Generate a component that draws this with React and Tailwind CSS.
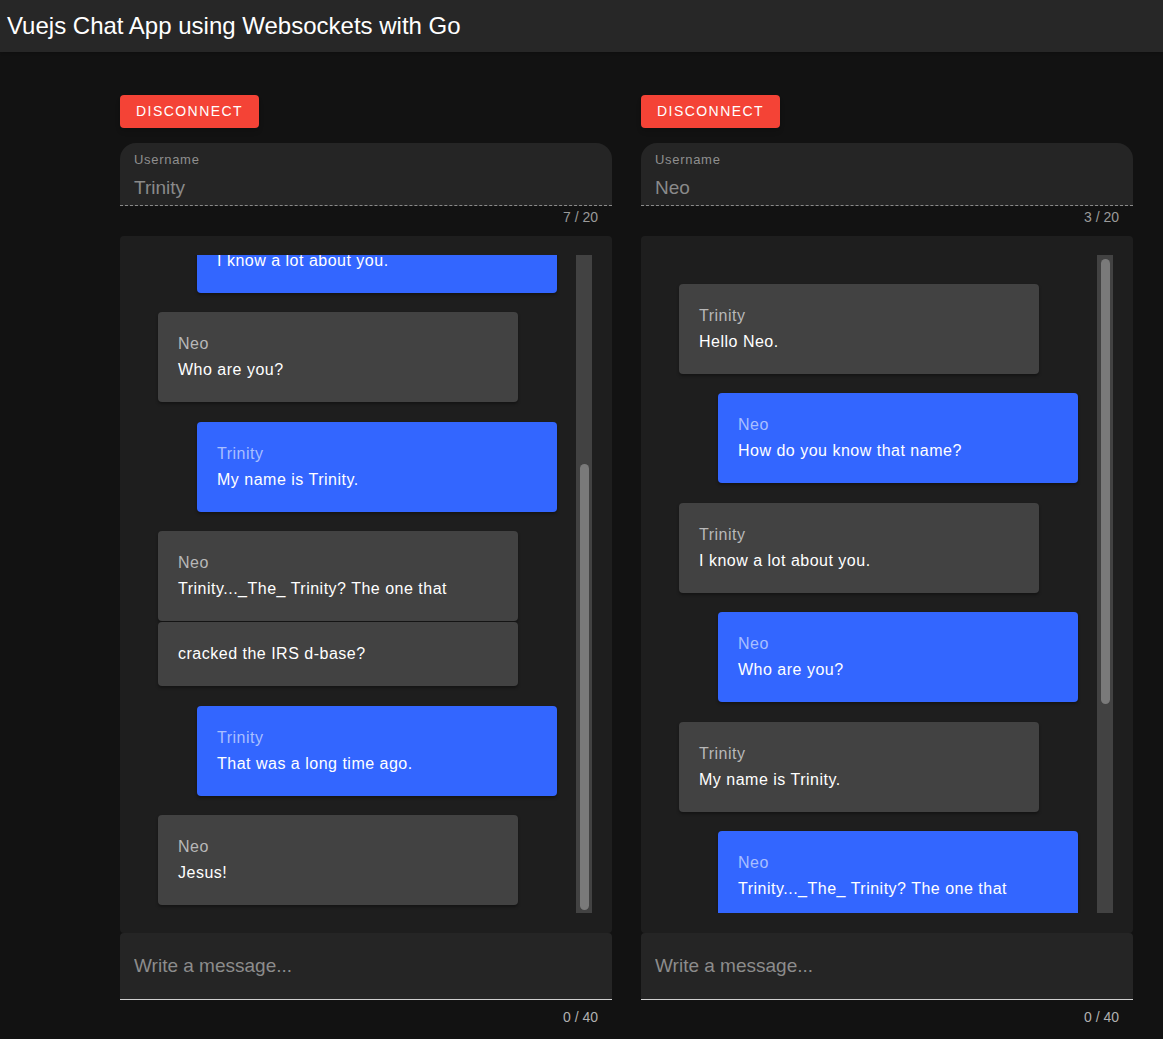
import React from 'react';

const font = { fontFamily: '"Liberation Sans", Arial, sans-serif' };

// left panel is scrolled to the bottom, right panel to the top
const leftMessages = [
  { from: 'Trinity', text: 'I know a lot about you.' },
  { from: 'Neo', text: 'Who are you?' },
  { from: 'Trinity', text: 'My name is Trinity.' },
  { from: 'Neo', text: 'Trinity..._The_ Trinity? The one that', more: 'cracked the IRS d-base?' },
  { from: 'Trinity', text: 'That was a long time ago.' },
  { from: 'Neo', text: 'Jesus!' },
];

const rightMessages = [
  { from: 'Trinity', text: 'Hello Neo.' },
  { from: 'Neo', text: 'How do you know that name?' },
  { from: 'Trinity', text: 'I know a lot about you.' },
  { from: 'Neo', text: 'Who are you?' },
  { from: 'Trinity', text: 'My name is Trinity.' },
  { from: 'Neo', text: 'Trinity..._The_ Trinity? The one that' },
];

const Bubble = ({ msg, mine }) => {
  const box = mine
    ? 'bg-[#3366ff] self-end mr-[19px]'
    : 'bg-[#424242] self-start ml-[18px]';
  const nameColor = mine ? 'text-[#a9bfff]' : 'text-[#b8b8b8]';
  return (
    <div className={`flex flex-col shrink-0 ${mine ? 'items-end' : 'items-start'}`}>
      <div className={`w-[360px] rounded px-5 pt-5 pb-5 shadow-[0_2px_3px_rgba(0,0,0,0.35)] ${box}`}>
        <div className={`text-base leading-6 mb-[2px] tracking-[0.5px] ${nameColor}`}>{msg.from}</div>
        <div className="text-base leading-6 tracking-[0.5px] text-white">{msg.text}</div>
      </div>
      {msg.more && (
        <div className={`w-[360px] mt-px rounded px-5 py-5 shadow-[0_2px_3px_rgba(0,0,0,0.35)] ${box}`}>
          <div className="text-base leading-6 tracking-[0.5px] text-white">{msg.more}</div>
        </div>
      )}
    </div>
  );
};

const ChatPanel = ({ user, messages, bottom, thumbTop, thumbHeight }) => (
  <div className="flex flex-col">
    <div>
      <button className="h-[33px] px-4 pb-[1px] rounded bg-[#f44336] text-white text-sm font-medium uppercase tracking-[1.45px] shadow-md">
        Disconnect
      </button>
    </div>

    <div className="mt-[15px] h-[63px] rounded-t-2xl bg-[#252525] border-b border-dashed border-[#8a8a8a] px-[14px] pt-[9px]">
      <div className="text-[13px] leading-4 tracking-[0.7px] text-[#8f8f8f]">Username</div>
      <div className="mt-[8px] text-[19px] leading-6 text-[#8a8a8a]">{user}</div>
    </div>
    <div className="h-[30px] flex justify-end items-start pt-[4px] px-[14px] text-sm leading-none text-[#9a9a9a]">
      {user.length} / 20
    </div>

    <div className="h-[697px] rounded bg-[#1e1e1e] pt-[19px] pb-5 px-5 flex">
      <div
        className={`flex-1 h-[658px] overflow-hidden flex flex-col gap-[19.4px] ${
          bottom ? 'justify-end pb-2' : 'justify-start pt-[29px]'
        }`}
      >
        {messages.map((m, i) => (
          <Bubble key={i} msg={m} mine={m.from === user} />
        ))}
      </div>
      <div className="w-4 h-[658px] bg-[#424242] relative">
        <div
          className={`absolute left-[4px] w-[9px] rounded-full bg-[#7a7a7a] ${thumbTop} ${thumbHeight}`}
        />
      </div>
    </div>

    <div className="h-[67px] rounded-t bg-[#252525] border-b border-[#d0d0d0] flex items-center px-[14px]">
      <input
        className="w-full bg-transparent outline-none text-[19px] text-white placeholder:text-[#8c8c8c]"
        placeholder="Write a message..."
        style={font}
      />
    </div>
    <div className="h-[34px] flex justify-end items-center px-[14px] text-sm leading-none text-[#b0b0b0]">
      0 / 40
    </div>
  </div>
);

export default function App() {
  return (
    <div className="min-h-screen bg-[#121212] text-white" style={font}>
      <header className="h-[52px] bg-[#272727] flex items-center px-[7px] shadow">
        <h1 className="text-2xl leading-8 text-white">Vuejs Chat App using Websockets with Go</h1>
      </header>
      <main className="pl-[120px] pr-[30px] pt-[43px] grid grid-cols-2 gap-[29px]">
        <ChatPanel
          user="Trinity"
          messages={leftMessages}
          bottom
          thumbTop="top-[209px]"
          thumbHeight="h-[446px]"
        />
        <ChatPanel
          user="Neo"
          messages={rightMessages}
          thumbTop="top-[4px]"
          thumbHeight="h-[445px]"
        />
      </main>
    </div>
  );
}
